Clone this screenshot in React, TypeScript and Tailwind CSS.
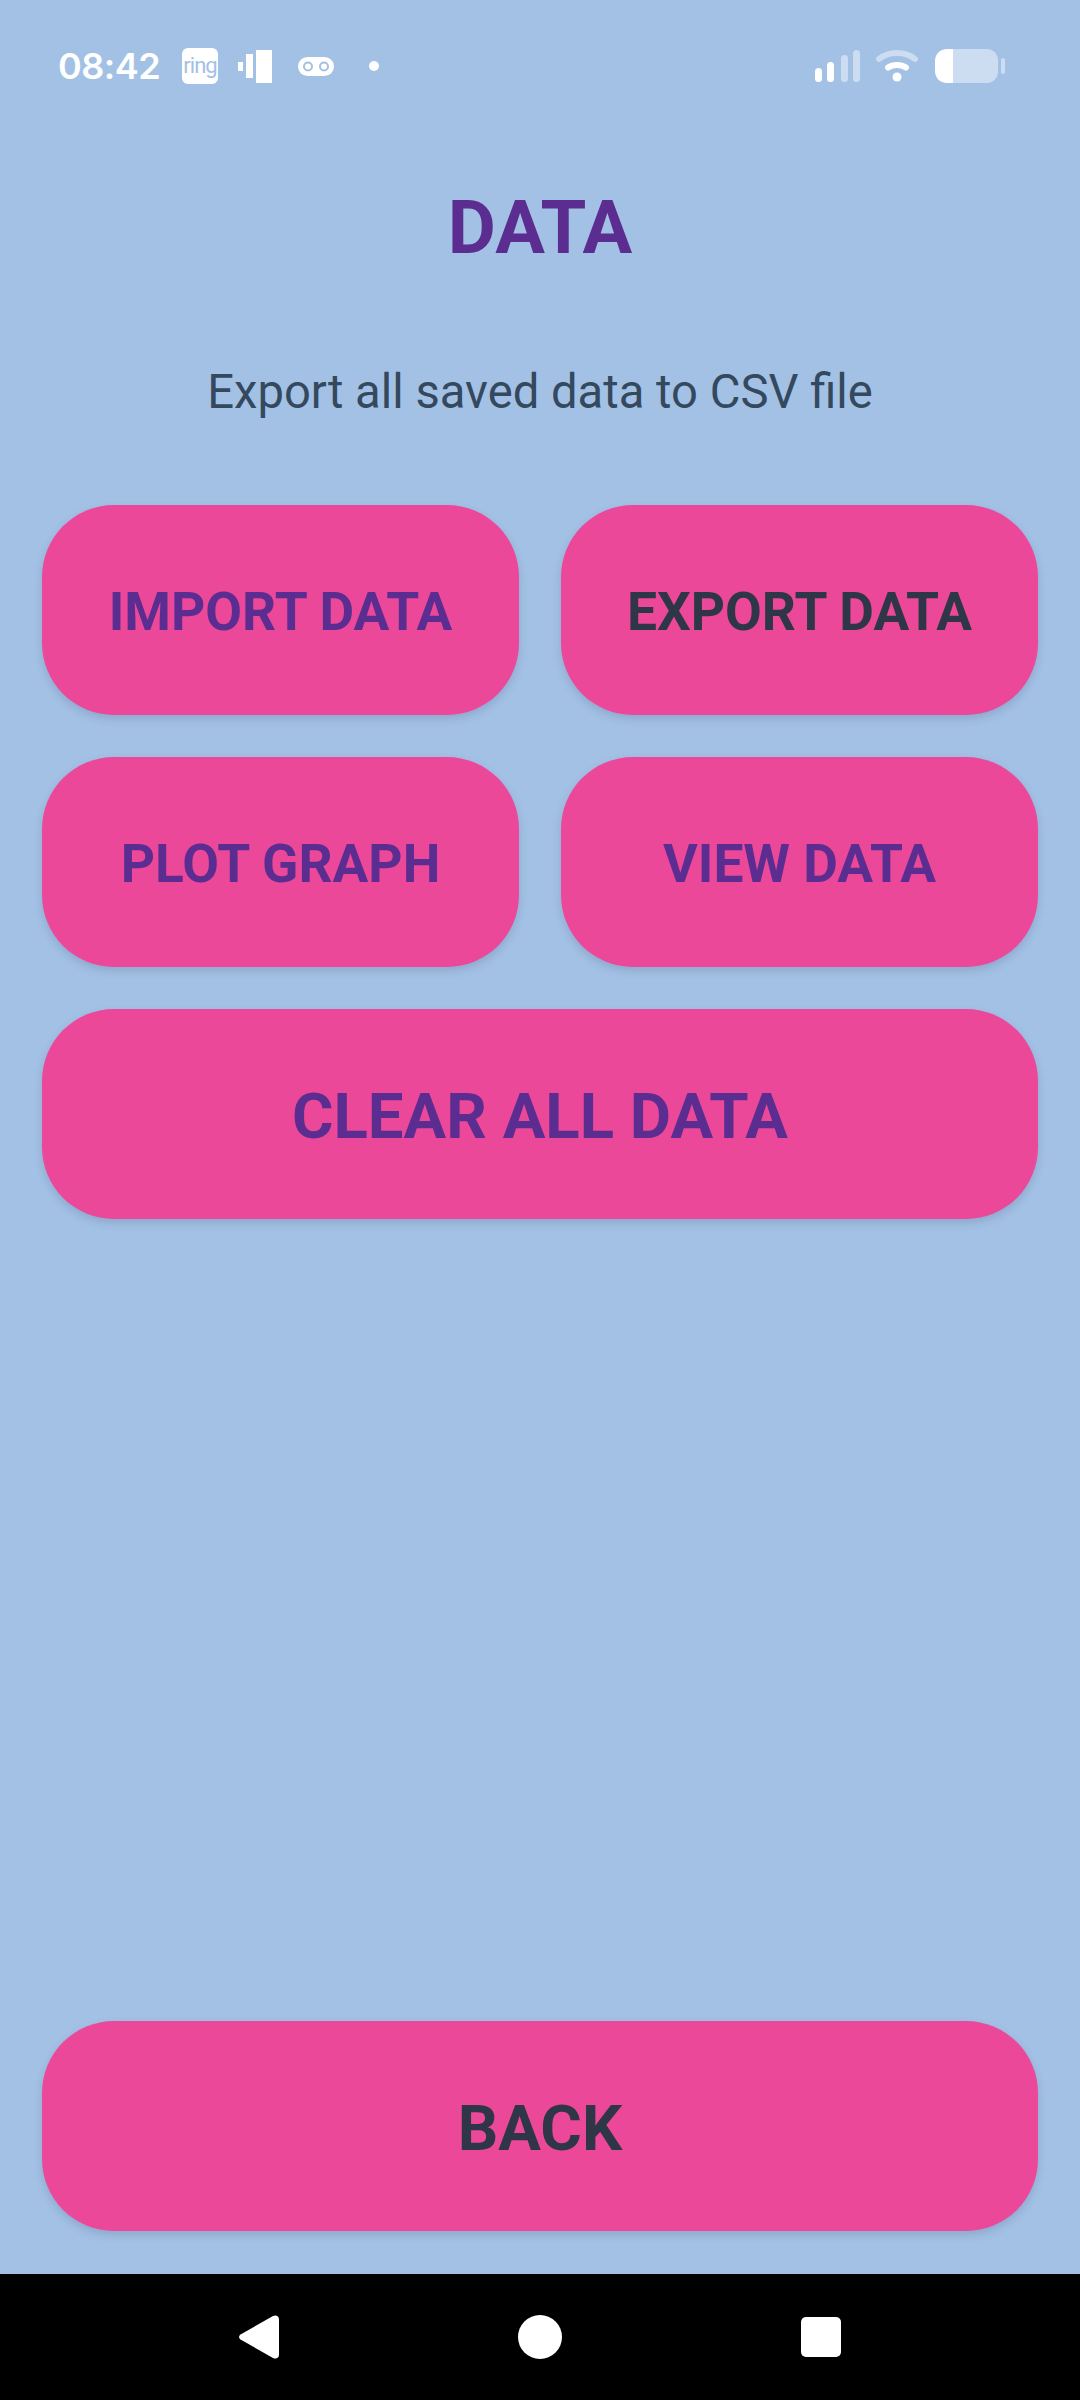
const PURPLE = "text-[#5b2d91]";
const DARK = "text-[#2f3647]";

function DataButton({ label, color, big }: { label: string; color: string; big?: boolean }) {
  return (
    <button
      className={`h-[210px] w-full rounded-[72px] bg-[#ec4899] pt-[6px] font-bold shadow-[0_4px_8px_rgba(60,70,110,0.2)] ${color} ${
        big ? "text-[63.5px]" : "text-[53.3px]"
      }`}
    >
      {label}
    </button>
  );
}

function StatusBar() {
  return (
    <div className="flex h-[132px] shrink-0 items-center pl-[58px] pr-[75px] text-white">
      <span className="w-[101px] text-[36px] font-semibold font-['Inter',sans-serif] tracking-[-0.5px]">08:42</span>
      <div className="ml-[23px] flex h-[36px] w-[36px] items-center justify-center rounded-[6px] bg-white">
        <span className="text-[22px] leading-none tracking-[-1px] text-[#a3c1e5] font-['Roboto',sans-serif]">ring</span>
      </div>
      <svg className="ml-[20px]" width="34" height="33" viewBox="0 0 34 33" fill="#fff">
        <rect x="0" y="12" width="5" height="9" />
        <rect x="8" y="4" width="7" height="24" />
        <rect x="18" y="0" width="16" height="33" />
      </svg>
      <svg className="ml-[26px]" width="36" height="19" viewBox="0 0 36 19" fill="none">
        <rect x="0" y="0" width="36" height="19" rx="9.5" fill="#fff" />
        <circle cx="10" cy="9.5" r="4" stroke="#a3c1e5" strokeWidth="2" />
        <circle cx="26" cy="9.5" r="4" stroke="#a3c1e5" strokeWidth="2" />
      </svg>
      <div className="ml-[35px] h-[10px] w-[10px] rounded-full bg-white" />
      <div className="flex-1" />
      <svg width="45" height="32" viewBox="0 0 45 32" fill="#fff">
        <rect x="0" y="18" width="7" height="14" rx="3.5" />
        <rect x="12" y="12" width="7" height="20" rx="3.5" />
        <rect x="26" y="5" width="7" height="27" rx="3.5" fillOpacity="0.45" />
        <rect x="38" y="0" width="7" height="32" rx="3.5" fillOpacity="0.45" />
      </svg>
      <svg className="ml-[16px]" width="42" height="32" viewBox="0 0 42 32" fill="none" strokeLinecap="round">
        <path d="M3 9C13 1 29 1 39 9" stroke="#fff" strokeOpacity="0.45" strokeWidth="6" />
        <path d="M12 17.500C17 14 25 14 30 17.500" stroke="#fff" strokeWidth="6" />
        <circle cx="21" cy="27" r="4.500" fill="#fff" />
      </svg>
      <svg className="ml-[17px]" width="70" height="34" viewBox="0 0 70 34" fill="#fff">
        <path d="M12 0H18V34H12C5 34 0 29 0 22V12C0 5 5 0 12 0Z" />
        <path d="M18 0H52C58 0 63 5 63 11V23C63 29 58 34 52 34H18Z" fillOpacity="0.45" />
        <rect x="66" y="9" width="4" height="16" rx="2" fillOpacity="0.45" />
      </svg>
    </div>
  );
}

function NavBar() {
  return (
    <div className="flex h-[126px] shrink-0 items-center justify-center bg-black pb-[1px]">
      <svg className="mr-[239px]" width="40" height="44" viewBox="0 0 40 44" fill="#fff">
        <path d="M1.500 19.500L34 1C37 -0.500 40 1 40 4.500V39.500C40 43 37 44.500 34 43L1.500 24.500C-0.500 23 -0.500 21 1.500 19.500Z" />
      </svg>
      <div className="h-[44px] w-[44px] rounded-full bg-white" />
      <div className="ml-[239px] h-[40px] w-[40px] rounded-[5px] bg-white" />
    </div>
  );
}

export default function App() {
  return (
    <div className="flex h-[2400px] w-[1080px] flex-col overflow-hidden bg-[#a3c1e5] font-['Roboto',sans-serif]">
      <StatusBar />
      <div className="flex flex-1 flex-col px-[42px]">
        <h1 className={`mt-[52px] text-center text-[74px] leading-[88px] font-bold ${PURPLE}`}>DATA</h1>
        <p className="mt-[94px] text-center text-[47.2px] leading-[52px] text-[#34495e]">Export all saved data to CSV file</p>
        <div className="mt-[87px] grid grid-cols-2 gap-x-[42px] gap-y-[42px]">
          <DataButton label="IMPORT DATA" color={PURPLE} />
          <DataButton label="EXPORT DATA" color={DARK} />
          <DataButton label="PLOT GRAPH" color={PURPLE} />
          <DataButton label="VIEW DATA" color={PURPLE} />
          <div className="col-span-2">
            <DataButton label="CLEAR ALL DATA" color={PURPLE} big />
          </div>
        </div>
        <div className="mt-auto mb-[43px]">
          <DataButton label="BACK" color={DARK} big />
        </div>
      </div>
      <NavBar />
    </div>
  );
}
